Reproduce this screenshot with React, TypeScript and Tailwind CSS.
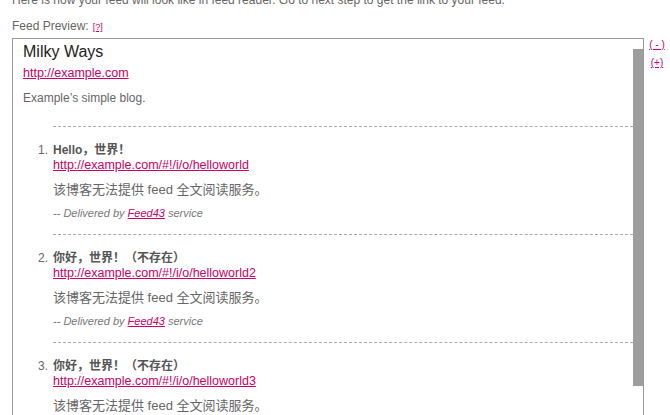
import React from 'react';

type FeedItem = {
  title: string;
  link: string;
  delivered: boolean;
};

const items: FeedItem[] = [
  { title: 'Hello，世界！', link: 'http://example.com/#!/i/o/helloworld', delivered: true },
  { title: '你好，世界！（不存在）', link: 'http://example.com/#!/i/o/helloworld2', delivered: true },
  { title: '你好，世界！（不存在）', link: 'http://example.com/#!/i/o/helloworld3', delivered: true },
];

const font = { fontFamily: '"Liberation Sans", "Noto Sans CJK SC", sans-serif' };

const App: React.FC = () => {
  return (
    <div className="w-[670px] h-[415px] overflow-hidden bg-white text-[#666]" style={font}>
      <div className="pl-[12px] -mt-[9px]">
        <p className="text-[12px] leading-[18px]">
          Here is how your feed will look like in feed reader. Go to next step to get the link to your feed.
        </p>
        <div className="mt-[9px] text-[12px] leading-[16px] flex items-end">
          <span>Feed Preview:</span>
          <a className="ml-[4px] text-[9px] leading-[14px] text-[#cc0066] underline">[?]</a>
        </div>

        <div className="mt-[4px] flex items-start">
          {/* preview frame */}
          <div className="w-[632px] h-[378px] border-t border-l border-r border-[#999] flex">
            <div className="w-[620px] h-[377px] border-b border-[#999] overflow-hidden pl-[10px]">
              <h1 className="pt-[3px] text-[16px] leading-[20px] text-[#222]">Milky Ways</h1>
              <a className="block mt-[3px] text-[12.5px] leading-[16px] text-[#cc0066] underline w-fit">
                http://example.com
              </a>
              <p className="mt-[9px] text-[12px] leading-[16px]">Example’s simple blog.</p>

              <ol className="mt-[20px]">
                {items.map((item, i) => (
                  <li key={i} className="ml-[30px] border-t border-dashed border-[#aaa] pt-[16px] pb-[14px]">
                    <div className="flex">
                      <span className="-ml-[15px] w-[15px] text-[12px] leading-[15px]">{i + 1}.</span>
                      <div>
                        <div className="text-[12px] leading-[15px] font-bold text-[#555]">{item.title}</div>
                        <a className="block text-[12.5px] leading-[15px] text-[#cc0066] underline w-fit">{item.link}</a>
                      </div>
                    </div>
                    <p className="mt-[8px] text-[13px] leading-[18px]">该博客无法提供 feed 全文阅读服务。</p>
                    {item.delivered && (
                      <p className="mt-[7px] text-[11px] leading-[14px] italic text-[#777]">
                        -- Delivered by <a className="text-[#cc0066] underline">Feed43</a> service
                      </p>
                    )}
                  </li>
                ))}
              </ol>
            </div>
            {/* scrollbar */}
            <div className="w-[10px] h-[377px] bg-white">
              <div className="mt-[10px] h-[337px] bg-[#9e9e9e]" />
            </div>
          </div>

          <div className="ml-[5px] w-[16px] flex flex-col items-center gap-[4px] text-[10px] leading-[14px] text-[#cc0066]">
            <a className="underline">( - )</a>
            <a className="underline">(+)</a>
          </div>
        </div>
      </div>
    </div>
  );
};

export default App;
